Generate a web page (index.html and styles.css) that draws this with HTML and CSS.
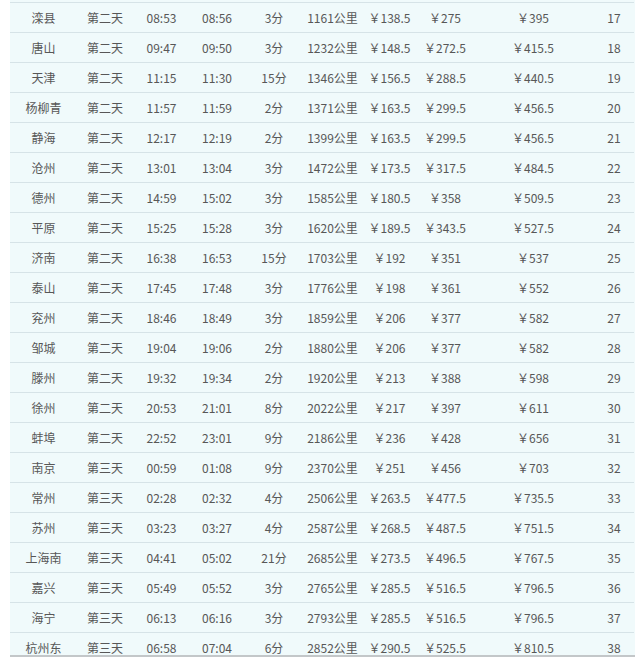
FILE: index.html
```html
<!DOCTYPE html>
<html lang="zh-CN">
<head>
<meta charset="utf-8">
<title>列车时刻表</title>
<link rel="stylesheet" href="styles.css">
</head>
<body>
<div class="frame">
<div class="scroller">
<table class="timetable">
<colgroup>
<col class="c-station"><col class="c-day"><col class="c-arr"><col class="c-dep"><col class="c-stop"><col class="c-dist"><col class="c-p1"><col class="c-p2"><col class="c-p3"><col class="c-no">
</colgroup>
<tbody>
<tr><td>滦县</td><td>第二天</td><td>08:53</td><td>08:56</td><td>3分</td><td>1161公里</td><td>￥138.5</td><td>￥275</td><td>￥395</td><td>17</td></tr>
<tr><td>唐山</td><td>第二天</td><td>09:47</td><td>09:50</td><td>3分</td><td>1232公里</td><td>￥148.5</td><td>￥272.5</td><td>￥415.5</td><td>18</td></tr>
<tr><td>天津</td><td>第二天</td><td>11:15</td><td>11:30</td><td>15分</td><td>1346公里</td><td>￥156.5</td><td>￥288.5</td><td>￥440.5</td><td>19</td></tr>
<tr><td>杨柳青</td><td>第二天</td><td>11:57</td><td>11:59</td><td>2分</td><td>1371公里</td><td>￥163.5</td><td>￥299.5</td><td>￥456.5</td><td>20</td></tr>
<tr><td>静海</td><td>第二天</td><td>12:17</td><td>12:19</td><td>2分</td><td>1399公里</td><td>￥163.5</td><td>￥299.5</td><td>￥456.5</td><td>21</td></tr>
<tr><td>沧州</td><td>第二天</td><td>13:01</td><td>13:04</td><td>3分</td><td>1472公里</td><td>￥173.5</td><td>￥317.5</td><td>￥484.5</td><td>22</td></tr>
<tr><td>德州</td><td>第二天</td><td>14:59</td><td>15:02</td><td>3分</td><td>1585公里</td><td>￥180.5</td><td>￥358</td><td>￥509.5</td><td>23</td></tr>
<tr><td>平原</td><td>第二天</td><td>15:25</td><td>15:28</td><td>3分</td><td>1620公里</td><td>￥189.5</td><td>￥343.5</td><td>￥527.5</td><td>24</td></tr>
<tr><td>济南</td><td>第二天</td><td>16:38</td><td>16:53</td><td>15分</td><td>1703公里</td><td>￥192</td><td>￥351</td><td>￥537</td><td>25</td></tr>
<tr><td>泰山</td><td>第二天</td><td>17:45</td><td>17:48</td><td>3分</td><td>1776公里</td><td>￥198</td><td>￥361</td><td>￥552</td><td>26</td></tr>
<tr><td>兖州</td><td>第二天</td><td>18:46</td><td>18:49</td><td>3分</td><td>1859公里</td><td>￥206</td><td>￥377</td><td>￥582</td><td>27</td></tr>
<tr><td>邹城</td><td>第二天</td><td>19:04</td><td>19:06</td><td>2分</td><td>1880公里</td><td>￥206</td><td>￥377</td><td>￥582</td><td>28</td></tr>
<tr><td>滕州</td><td>第二天</td><td>19:32</td><td>19:34</td><td>2分</td><td>1920公里</td><td>￥213</td><td>￥388</td><td>￥598</td><td>29</td></tr>
<tr><td>徐州</td><td>第二天</td><td>20:53</td><td>21:01</td><td>8分</td><td>2022公里</td><td>￥217</td><td>￥397</td><td>￥611</td><td>30</td></tr>
<tr><td>蚌埠</td><td>第二天</td><td>22:52</td><td>23:01</td><td>9分</td><td>2186公里</td><td>￥236</td><td>￥428</td><td>￥656</td><td>31</td></tr>
<tr><td>南京</td><td>第三天</td><td>00:59</td><td>01:08</td><td>9分</td><td>2370公里</td><td>￥251</td><td>￥456</td><td>￥703</td><td>32</td></tr>
<tr><td>常州</td><td>第三天</td><td>02:28</td><td>02:32</td><td>4分</td><td>2506公里</td><td>￥263.5</td><td>￥477.5</td><td>￥735.5</td><td>33</td></tr>
<tr><td>苏州</td><td>第三天</td><td>03:23</td><td>03:27</td><td>4分</td><td>2587公里</td><td>￥268.5</td><td>￥487.5</td><td>￥751.5</td><td>34</td></tr>
<tr><td>上海南</td><td>第三天</td><td>04:41</td><td>05:02</td><td>21分</td><td>2685公里</td><td>￥273.5</td><td>￥496.5</td><td>￥767.5</td><td>35</td></tr>
<tr><td>嘉兴</td><td>第三天</td><td>05:49</td><td>05:52</td><td>3分</td><td>2765公里</td><td>￥285.5</td><td>￥516.5</td><td>￥796.5</td><td>36</td></tr>
<tr><td>海宁</td><td>第三天</td><td>06:13</td><td>06:16</td><td>3分</td><td>2793公里</td><td>￥285.5</td><td>￥516.5</td><td>￥796.5</td><td>37</td></tr>
<tr><td>杭州东</td><td>第三天</td><td>06:58</td><td>07:04</td><td>6分</td><td>2852公里</td><td>￥290.5</td><td>￥525.5</td><td>￥810.5</td><td>38</td></tr>
</tbody>
</table>
</div>
</div>
</body>
</html>
```

FILE: styles.css
```css
html, body {
  margin: 0;
  padding: 0;
  background: #ffffff;
}

body {
  font-family: "Microsoft YaHei", "Noto Sans CJK SC", sans-serif;
  font-size: 12px;
  color: #575757;
}

.frame {
  width: 635px;
  height: 658px;
  overflow: hidden;
}

.scroller {
  margin-left: 10px;
  height: 655px;
  overflow: hidden;
  background: #f0fafb;
  border-bottom: 2px solid #c3c7c9;
}

.timetable {
  border-collapse: collapse;
  table-layout: fixed;
  width: 624px;
  margin-top: 2px;
  background: #f0fafb;
}

.timetable td {
  height: 29px;
  padding: 0;
  text-align: center;
  vertical-align: middle;
  white-space: nowrap;
  border-top: 1px solid #d6e3e7;
  line-height: 29px;
}

.c-station { width: 67px; }
.c-day { width: 56px; }
.c-arr { width: 57px; }
.c-dep { width: 54px; }
.c-stop { width: 60px; }
.c-dist { width: 57px; }
.c-p1 { width: 57px; }
.c-p2 { width: 54px; }
.c-p3 { width: 122px; }
.c-no { width: 40px; }
```
